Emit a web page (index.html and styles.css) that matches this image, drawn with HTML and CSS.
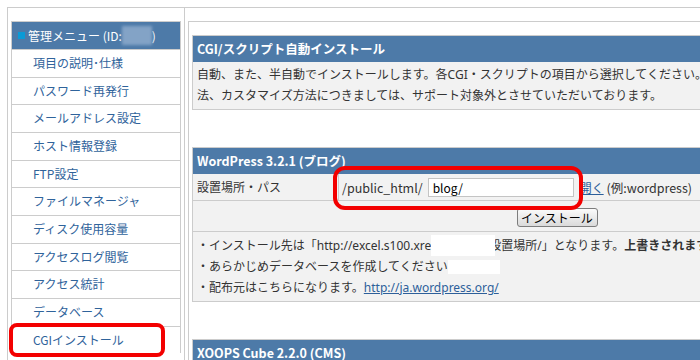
FILE: index.html
```html
<!DOCTYPE html>
<html lang="ja">
<head>
<meta charset="UTF-8" />
<title>CGIインストール</title>
<link rel="stylesheet" href="styles.css">
</head>
<body>

<div class="layout">
  <div class="side">
    <div class="menu">
      <div class="menu-head"><span class="dot"></span>管理メニュー (ID:<span class="hidden-id"></span>)</div>
      <a class="menu-item" href="#">項目の説明･仕様</a>
      <a class="menu-item" href="#">パスワード再発行</a>
      <a class="menu-item" href="#">メールアドレス設定</a>
      <a class="menu-item" href="#">ホスト情報登録</a>
      <a class="menu-item" href="#">FTP設定</a>
      <a class="menu-item" href="#">ファイルマネージャ</a>
      <a class="menu-item" href="#">ディスク使用容量</a>
      <a class="menu-item" href="#">アクセスログ閲覧</a>
      <a class="menu-item" href="#">アクセス統計</a>
      <a class="menu-item" href="#">データベース</a>
      <a class="menu-item" href="#">CGIインストール</a>
    </div>
  </div>

  <div class="main">
    <div class="panel">

      <div class="box">
        <div class="box-head">CGI/スクリプト自動インストール</div>
        <div class="box-body">
          自動、また、半自動でインストールします。各CGI・スクリプトの項目から選択してください。インストール方<br>
          法、カスタマイズ方法につきましては、サポート対象外とさせていただいております。
        </div>
      </div>

      <div class="box">
        <div class="box-head">WordPress 3.2.1 (ブログ)</div>
        <div class="row">
          <div class="cell-label">設置場所・パス</div>
          <div class="cell-value">
            /public_html/<input type="text" class="path-input" value="blog/"><a href="#" class="link link-open">開く</a> (例:wordpress)
          </div>
        </div>
        <div class="row row-button">
          <button type="button" class="btn">インストール</button>
        </div>
        <div class="notes">
          ・インストール先は「http://excel.s100.xre<span class="blank"></span>設置場所/」となります。<b>上書きされますので</b><br>
          ・あらかじめデータベースを作成してください<span class="blank blank-2"></span><br>
          ・配布元はこちらになります。<a href="#" class="link">http://ja.wordpress.org/</a>
        </div>
      </div>

      <div class="box">
        <div class="box-head">XOOPS Cube 2.2.0 (CMS)</div>
        <div class="box-body">&nbsp;</div>
      </div>

    </div>
  </div>
</div>

<div class="marker marker-path"></div>
<div class="marker marker-cgi"></div>

</body>
</html>
```

FILE: styles.css
```css
body {
  margin: 0;
  font-family: "Noto Sans CJK JP", sans-serif;
  font-size: 12px;
  color: #333;
  background-color: #fff;
  overflow: hidden;
}
.layout {
  display: flex;
  margin: 7px 0 0 7px;
  border-top: 1px solid #ccc;
  border-left: 1px solid #ccc;
  min-height: 400px;
}

/* menu */
.side {
  flex: none;
  width: 177px;
  box-sizing: border-box;
  padding: 13px 3px 0 3px;
  border-right: 1px solid #ccc;
}
.menu {
  border: 1px solid #ccc;
  border-bottom: none;
}
.menu-head {
  display: flex;
  align-items: center;
  height: 27px;
  padding-left: 6px;
  background-color: #4d7aa8;
  color: #fff;
  white-space: nowrap;
}
.dot {
  width: 7px;
  height: 7px;
  margin-right: 3px;
  background-color: #0a9ad6;
}
.hidden-id {
  display: inline-block;
  width: 30px;
  height: 19px;
  background-color: #83a3c6;
  filter: blur(1.5px);
}
.menu-item {
  display: block;
  padding: 4px 0 4px 21px;
  line-height: 18.67px;
  border-top: 1px solid #ccc;
  color: #2f639b;
  text-decoration: none;
}

/* main */
.main {
  flex: 1;
  padding: 13px 0 0 3px;
  font-family: "Noto Sans", "Noto Sans CJK JP", sans-serif;
}
.panel {
  width: 760px;
  border: 1px solid #ccc;
  border-right: none;
  padding: 13px 0 0 3px;
}
.box {
  width: 728px;
  border: 1px solid #ccc;
  margin-bottom: 37px;
  background-color: #f2f2f2;
}
.box-head {
  height: 26px;
  line-height: 26px;
  padding-left: 4px;
  background-color: #4d7aa8;
  color: #fff;
  font-family: "Noto Sans CJK JP", sans-serif;
  font-weight: bold;
  font-size: 12.5px;
  white-space: nowrap;
}
.box-body {
  padding: 3px 4px;
  line-height: 20.5px;
  white-space: nowrap;
}
.row {
  display: flex;
  border-bottom: 1px solid #ccc;
}
.cell-label {
  width: 146px;
  flex: none;
  box-sizing: border-box;
  padding: 0 4px;
  display: flex;
  align-items: center;
  border-right: 1px solid #ccc;
}
.cell-value {
  padding: 4px 3px 3px 3px;
  line-height: 19px;
  height: 19px;
  white-space: nowrap;
  font-family: "Noto Sans CJK JP", sans-serif;
  font-size: 12.5px;
}
.path-input {
  width: 146px;
  height: 19px;
  box-sizing: border-box;
  margin: 0 6px 0 5px;
  padding: 0 4px;
  border: 1px solid #c4c4c4;
  font-family: "Noto Sans CJK JP", sans-serif;
  font-size: 12px;
  color: #000;
  vertical-align: top;
}
.link {
  color: #2d5f9a;
}
.link-open {
  font-size: 12px;
}
.row-button {
  justify-content: center;
  padding: 7px 0 4px;
}
.btn {
  width: 81px;
  height: 19px;
  padding: 0;
  border: 1px solid #7d7d7d;
  border-radius: 3px;
  background: linear-gradient(#fbfbfb, #dadada);
  font-family: "Noto Sans CJK JP", sans-serif;
  font-size: 12px;
  color: #000;
  line-height: 17px;
}
.notes {
  padding: 3px 4px;
  line-height: 21px;
  white-space: nowrap;
}
.blank {
  display: inline-block;
  width: 64px;
  height: 21px;
  margin-right: -6px;
  vertical-align: top;
  background-color: #fff;
  position: relative;
}
.blank-2 {
  width: 52px;
  height: 14px;
  margin-top: 4px;
  margin-right: 0;
}

/* red highlight marks */
.marker {
  position: absolute;
  border: 4px solid #f30000;
  border-radius: 12px;
}
.marker-path {
  left: 333px;
  top: 166px;
  width: 242px;
  height: 36px;
}
.marker-cgi {
  left: 9px;
  top: 323px;
  width: 148px;
  height: 26px;
  border-radius: 8px;
}
```
